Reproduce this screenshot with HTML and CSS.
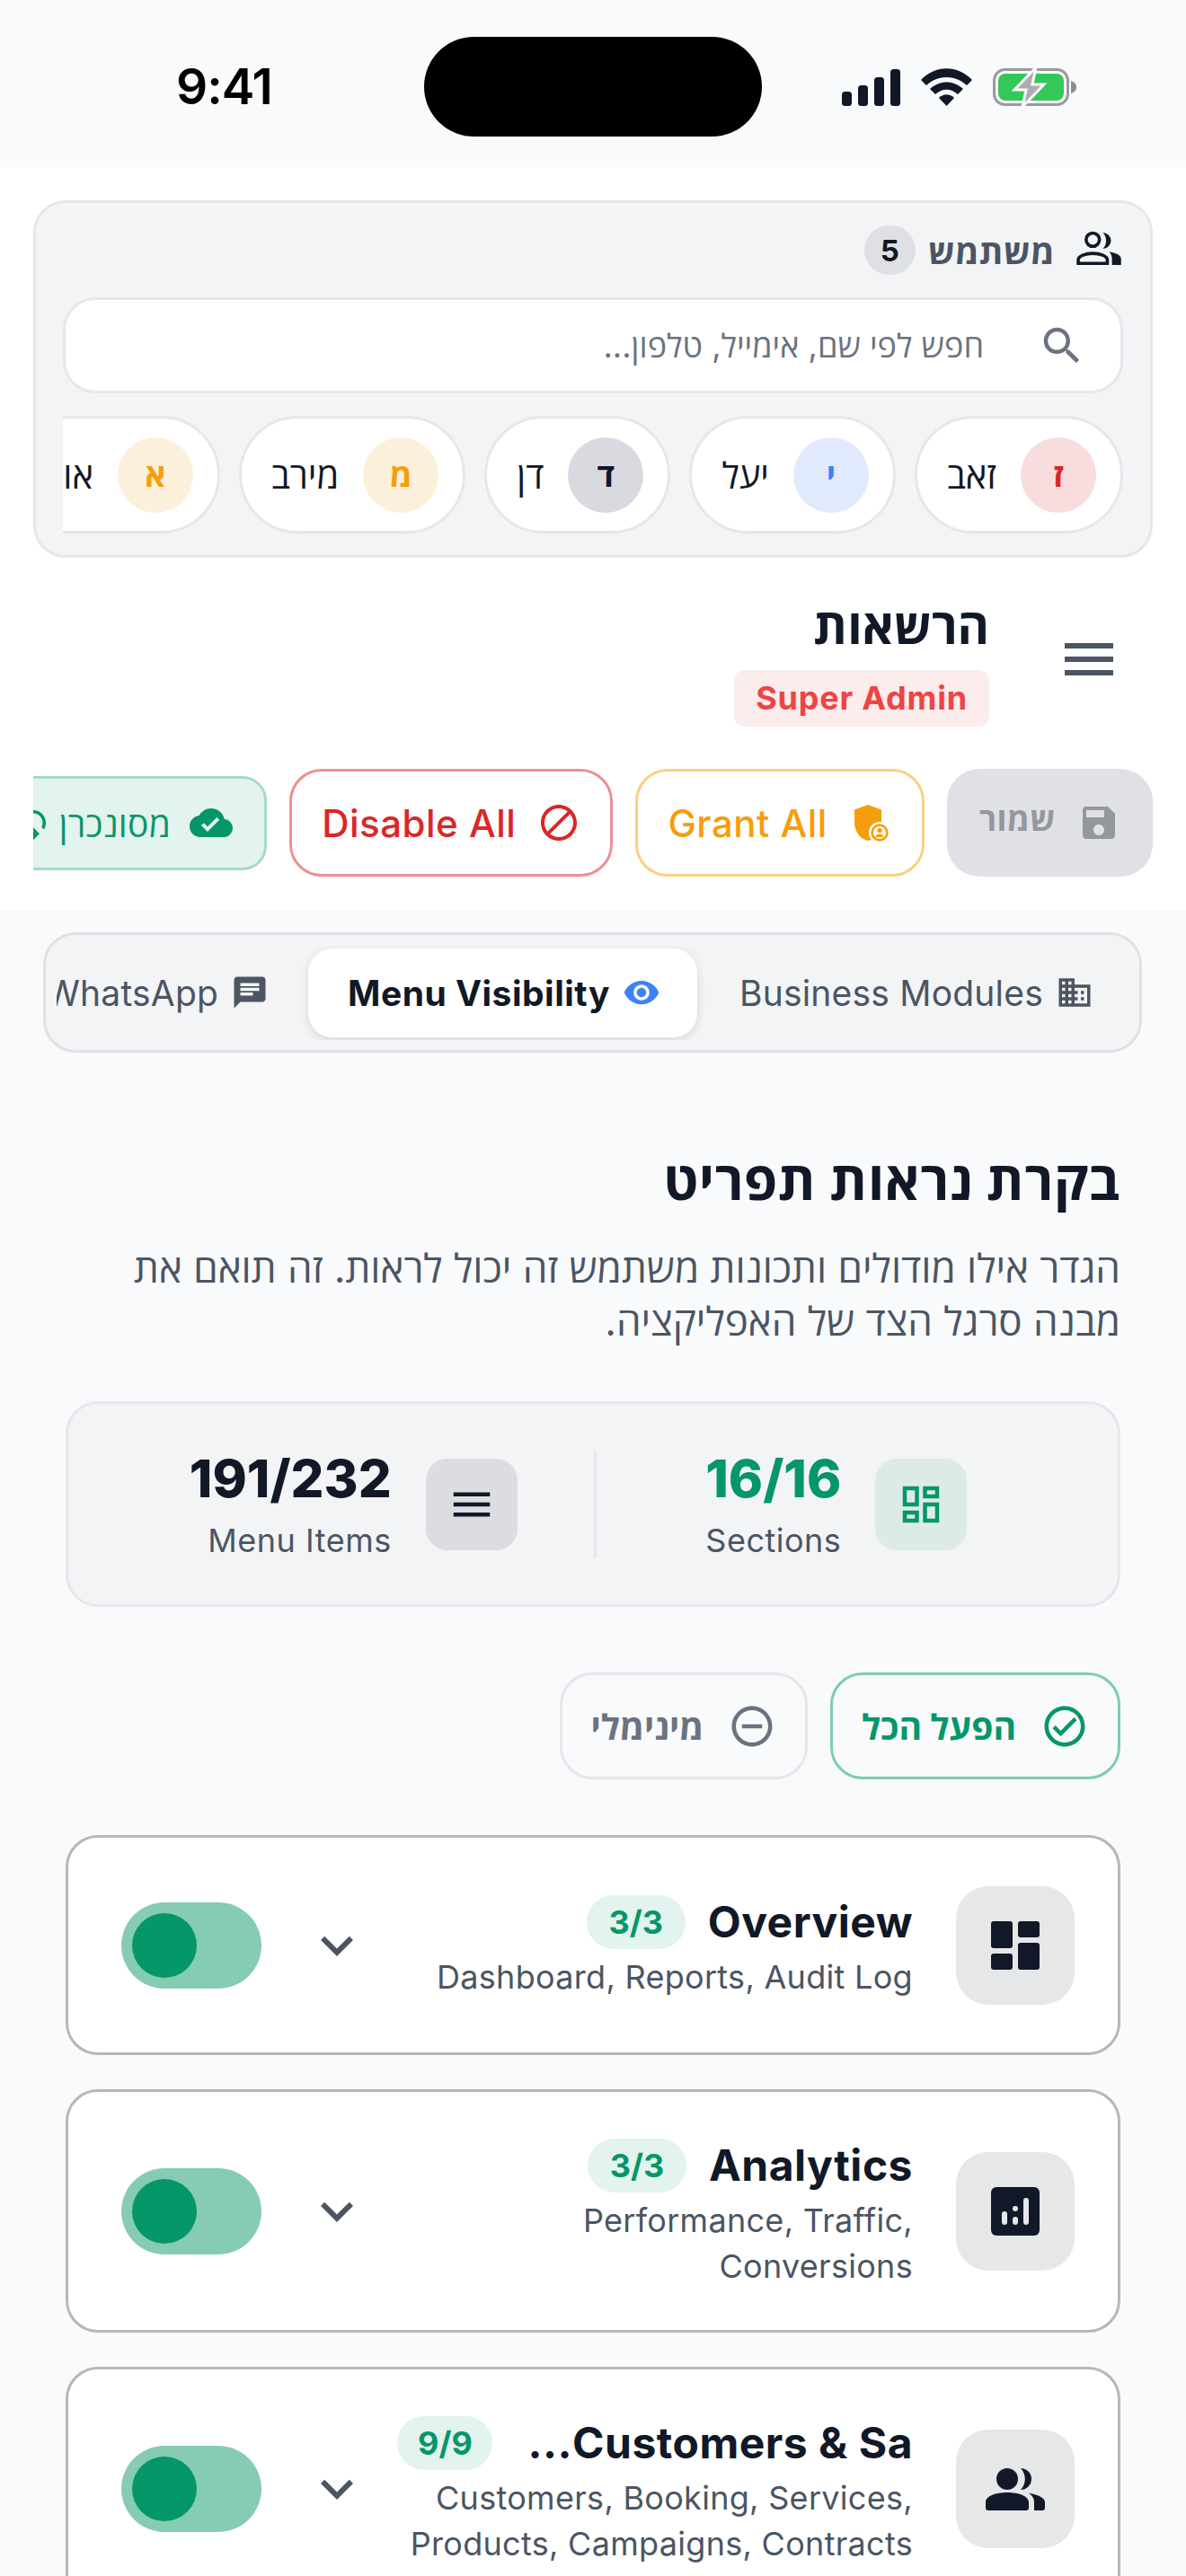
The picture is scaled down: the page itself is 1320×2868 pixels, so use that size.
FILE: index.html
```html
<!DOCTYPE html>
<html lang="he" dir="rtl">
<head>
<meta charset="utf-8">
<title>הרשאות</title>
<link rel="stylesheet" href="styles.css">
</head>
<body>
<div class="status" dir="ltr">
  <div class="time">9:41</div>
  <div class="island"></div>
  <div class="status-icons">
    <svg class="sig" viewBox="0 0 65 41"><rect x="0" y="25" width="11" height="16" rx="3.5"/><rect x="18" y="18" width="11" height="23" rx="3.5"/><rect x="36" y="9" width="11" height="32" rx="3.5"/><rect x="54" y="0" width="11" height="41" rx="3.5"/></svg>
    <svg class="wifi" viewBox="0 0 57 42"><path d="M0 13 C16 -4 41 -4 57 13 L51 19 C38 7 19 7 6 19Z"/><path d="M10 23 C21 13 36 13 47 23 L41 29 C33 22 24 22 16 29Z"/><path d="M20 33 C25 28 32 28 37 33 L28.5 42Z"/></svg>
    <svg class="bat" viewBox="0 0 93 44"><rect x="1.5" y="2.5" width="82" height="39" rx="12" fill="none" stroke="#9a9a9c" stroke-width="3"/><path d="M87 15c3 1 6 3 6 7s-3 6-6 7z" fill="#8e8e90"/><rect x="6" y="7" width="73" height="30" rx="8" fill="#34c759"/><path d="M48 0 L24 25 H37 L33 44 L57 19 H44Z" fill="#aeaeb2" stroke="#f9fafb" stroke-width="3"/></svg>
  </div>
</div>

<section class="panel">
  <div class="users">
    <div class="users-head">
      <svg class="ic54 dark" viewBox="0 0 24 24"><circle cx="9" cy="7.500" r="3.300" fill="none" stroke="currentColor" stroke-width="1.600"/><path d="M1.800 19.200v-1.700c0-2 3.600-3.200 7.200-3.200s7.200 1.200 7.200 3.200v1.700z" fill="none" stroke="currentColor" stroke-width="1.600"/><path d="M14 4a4 4 0 1 1 0 8c1-1 1.600-2.500 1.600-4S15 5 14 4zM17 13.400c2.500.4 6 1.400 6 3.600v3h-4.500v-3c0-1.600-.4-2.600-1.500-3.600z"/></svg>
      <span class="users-title">משתמש</span>
      <span class="count">5</span>
    </div>
    <div class="search">
      <svg class="ic54 grey" viewBox="0 0 24 24"><path d="M15.5 14h-.79l-.28-.27C15.41 12.59 16 11.11 16 9.5 16 5.910 13.090 3 9.500 3S3 5.910 3 9.500 5.910 16 9.500 16c1.610 0 3.090-.590 4.230-1.570l.270.280v.790l5 4.990L20.490 19l-4.990-5zm-6 0C7.010 14 5 11.990 5 9.500S7.010 5 9.500 5 14 7.010 14 9.500 11.990 14 9.500 14z"/></svg>
      <span class="placeholder">חפש לפי שם, אימייל, טלפון...</span>
    </div>
    <div class="chips">
      <div class="chip"><span class="av av-red">ז</span><span class="chip-name">זאב</span></div>
      <div class="chip"><span class="av av-blue">י</span><span class="chip-name">יעל</span></div>
      <div class="chip"><span class="av av-grey">ד</span><span class="chip-name">דן</span></div>
      <div class="chip"><span class="av av-amber">מ</span><span class="chip-name">מירב</span></div>
      <div class="chip"><span class="av av-amber">א</span><span class="chip-name">אורי</span></div>
    </div>
  </div>

  <div class="page-head">
    <svg class="hamburger" viewBox="0 0 54 36"><rect width="54" height="6"/><rect y="15" width="54" height="6"/><rect y="30" width="54" height="6"/></svg>
    <div class="page-titles">
      <h1>הרשאות</h1>
      <span class="role" dir="ltr">Super Admin</span>
    </div>
  </div>

  <div class="actions">
    <div class="btn btn-save"><svg class="ic48" viewBox="0 0 24 24"><path d="M17 3H5c-1.110 0-2 .9-2 2v14c0 1.100.890 2 2 2h14c1.100 0 2-.9 2-2V7l-4-4zm-5 16c-1.660 0-3-1.340-3-3s1.340-3 3-3 3 1.340 3 3-1.340 3-3 3zm3-10H5V5h10v4z"/></svg><span class="save-label">שמור</span></div>
    <div class="btn btn-grant"><svg class="ic48" viewBox="0 0 24 24"><path d="M10.500 2 18 4.800v7.200c0 5-3.200 9-7.500 10C6.200 21 3 17 3 12V4.800z"/><circle cx="17" cy="17.500" r="6" fill="#fff"/><circle cx="17" cy="17.500" r="4.200" fill="none" stroke="currentColor" stroke-width="1.300"/><circle cx="17" cy="16.300" r="1.300"/><path d="M14.700 20c.3-1.200 1.200-1.700 2.300-1.700s2 .5 2.300 1.700z"/></svg><span dir="ltr">Grant All</span></div>
    <div class="btn btn-disable"><svg class="ic48" viewBox="0 0 24 24"><path d="M12 2C6.480 2 2 6.480 2 12s4.480 10 10 10 10-4.480 10-10S17.520 2 12 2zM4 12c0-4.420 3.580-8 8-8 1.850 0 3.550.630 4.900 1.690L5.690 16.900C4.630 15.550 4 13.850 4 12zm8 8c-1.850 0-3.550-.630-4.900-1.690L18.310 7.100C19.370 8.450 20 10.150 20 12c0 4.420-3.580 8-8 8z"/></svg><span dir="ltr">Disable All</span></div>
    <div class="btn btn-sync"><svg class="ic48" viewBox="0 0 24 24"><path d="M19.350 10.040C18.670 6.590 15.640 4 12 4 9.110 4 6.600 5.640 5.350 8.040 2.340 8.360 0 10.910 0 14c0 3.310 2.690 6 6 6h13c2.760 0 5-2.240 5-5 0-2.640-2.050-4.780-4.650-4.960zM10 17l-3.500-3.500 1.410-1.410L10 14.170 15.180 9l1.410 1.410L10 17z"/></svg><span>מסונכרן</span><svg class="ic42 sync-ic" viewBox="0 0 24 24"><path d="M12 4V1L8 5l4 4V6c3.310 0 6 2.690 6 6 0 1.010-.250 1.970-.700 2.800l1.460 1.460C19.540 15.030 20 13.570 20 12c0-4.420-3.580-8-8-8zm0 14c-3.310 0-6-2.690-6-6 0-1.010.250-1.970.700-2.800L5.240 7.740C4.460 8.970 4 10.430 4 12c0 4.420 3.580 8 8 8v3l4-4-4-4v3z"/></svg></div>
  </div>
</section>

<main class="main">
  <nav class="tabs">
    <div class="tabs-inner">
      <div class="tab"><svg class="ic42" viewBox="0 0 24 24"><path d="M12 7V3H2v18h20V7H12zM6 19H4v-2h2v2zm0-4H4v-2h2v2zm0-4H4V9h2v2zm0-4H4V5h2v2zm4 12H8v-2h2v2zm0-4H8v-2h2v2zm0-4H8V9h2v2zm0-4H8V5h2v2zm10 12h-8v-2h2v-2h-2v-2h2v-2h-2V9h8v10zm-2-8h-2v2h2v-2zm0 4h-2v2h2v-2z"/></svg><span dir="ltr">Business Modules</span></div>
      <div class="tab tab-active"><svg class="ic42 blue" viewBox="0 0 24 24"><path d="M12 4.500C7 4.500 2.730 7.610 1 12c1.730 4.390 6 7.500 11 7.500s9.270-3.110 11-7.500c-1.730-4.390-6-7.500-11-7.500zM12 17c-2.760 0-5-2.240-5-5s2.240-5 5-5 5 2.240 5 5-2.240 5-5 5zm0-8c-1.660 0-3 1.340-3 3s1.340 3 3 3 3-1.340 3-3-1.340-3-3-3z"/></svg><span dir="ltr">Menu Visibility</span></div>
      <div class="tab"><svg class="ic42" viewBox="0 0 24 24"><path d="M20 2H4c-1.100 0-1.990.9-1.990 2L2 22l4-4h14c1.100 0 2-.9 2-2V4c0-1.100-.9-2-2-2zM6 9h12v2H6V9zm8 5H6v-2h8v2zm4-6H6V6h12v2z"/></svg><span dir="ltr">WhatsApp</span></div>
    </div>
  </nav>

  <div class="content">
    <h2>בקרת נראות תפריט</h2>
    <p class="desc">הגדר אילו מודולים ותכונות משתמש זה יכול לראות. זה תואם את מבנה סרגל הצד של האפליקציה.</p>

    <div class="stats">
      <div class="stat stat-first">
        <div class="stat-ic stat-ic-green"><svg class="ic54" viewBox="0 0 24 24"><path d="M19 5v2h-4V5h4M9 5v6H5V5h4m10 8v6h-4v-6h4M9 17v2H5v-2h4M21 3h-8v6h8V3zM11 3H3v10h8V3zm10 8h-8v10h8V11zm-10 4H3v6h8v-6z"/></svg></div>
        <div class="stat-text"><div class="stat-num green" dir="ltr">16/16</div><div class="stat-label" dir="ltr">Sections</div></div>
      </div>
      <div class="stat-div"></div>
      <div class="stat stat-last">
        <div class="stat-ic stat-ic-grey"><svg class="ic54" viewBox="0 0 24 24"><path d="M3 18h18v-2H3v2zm0-5h18v-2H3v2zm0-7v2h18V6H3z"/></svg></div>
        <div class="stat-text"><div class="stat-num" dir="ltr">191/232</div><div class="stat-label" dir="ltr">Menu Items</div></div>
      </div>
    </div>

    <div class="bulk">
      <div class="bulk-btn bulk-on"><svg class="ic54" viewBox="0 0 24 24"><path d="M12 2C6.480 2 2 6.480 2 12s4.480 10 10 10 10-4.480 10-10S17.520 2 12 2zm0 18c-4.410 0-8-3.590-8-8s3.590-8 8-8 8 3.590 8 8-3.590 8-8 8zm4.590-12.420L10 14.170l-2.590-2.580L6 13l4 4 8-8z"/></svg><span>הפעל הכל</span></div>
      <div class="bulk-btn bulk-min"><svg class="ic54" viewBox="0 0 24 24"><path d="M7 11v2h10v-2H7zm5-9C6.480 2 2 6.480 2 12s4.480 10 10 10 10-4.480 10-10S17.520 2 12 2zm0 18c-4.410 0-8-3.590-8-8s3.590-8 8-8 8 3.590 8 8-3.590 8-8 8z"/></svg><span>מינימלי</span></div>
    </div>

    <div class="cards">
      <article class="card card-short">
        <div class="card-ic"><svg class="ic72" viewBox="0 0 24 24"><rect x="3" y="3" width="8" height="10" rx="1"/><rect x="3" y="15" width="8" height="6" rx="1"/><rect x="13" y="3" width="8" height="6" rx="1"/><rect x="13" y="11" width="8" height="10" rx="1"/></svg></div>
        <div class="card-body">
          <div class="card-title-row"><h3 dir="ltr">Overview</h3><span class="pill" dir="ltr">3/3</span></div>
          <p class="card-sub">Dashboard, Reports, Audit Log</p>
        </div>
        <svg class="chev" viewBox="0 0 24 24"><path d="M7.410 8.590L12 13.170l4.590-4.580L18 10l-6 6-6-6 1.410-1.410z"/></svg>
        <div class="toggle"><span class="knob"></span></div>
      </article>
      <article class="card">
        <div class="card-ic"><svg class="ic72" viewBox="0 0 24 24"><rect x="3" y="3" width="18" height="18" rx="2"/><g class="holes"><rect x="7" y="12" width="2" height="5" rx="1"/><rect x="11" y="14" width="2" height="3" rx="1"/><rect x="11" y="10" width="2" height="2" rx="1"/><rect x="15" y="7" width="2" height="10" rx="1"/></g></svg></div>
        <div class="card-body">
          <div class="card-title-row"><h3 dir="ltr">Analytics</h3><span class="pill" dir="ltr">3/3</span></div>
          <p class="card-sub">Performance, Traffic, Conversions</p>
        </div>
        <svg class="chev" viewBox="0 0 24 24"><path d="M7.410 8.590L12 13.170l4.590-4.580L18 10l-6 6-6-6 1.410-1.410z"/></svg>
        <div class="toggle"><span class="knob"></span></div>
      </article>
      <article class="card">
        <div class="card-ic"><svg class="ic72" viewBox="0 0 24 24"><circle cx="9" cy="8.300" r="4"/><path d="M1 19v-2c0-2.500 4-3.700 8-3.700s8 1.200 8 3.700v2a1 1 0 0 1-1 1H2a1 1 0 0 1-1-1zM14 4.300a4 4 0 1 1 0 8c1-1 1.600-2.500 1.600-4S15 5.300 14 4.300zM17 13.600c2.500.4 6 1.400 6 3.400v2a1 1 0 0 1-1 1h-3v-3c0-1.600-.8-2.600-2-3.400z"/></svg></div>
        <div class="card-body">
          <div class="card-title-row card-title-cut"><h3>Customers &amp; Sa...</h3><span class="pill pill-narrow" dir="ltr">9/9</span></div>
          <p class="card-sub">Customers, Booking, Services, Products, Campaigns, Contracts</p>
        </div>
        <svg class="chev" viewBox="0 0 24 24"><path d="M7.410 8.590L12 13.170l4.590-4.580L18 10l-6 6-6-6 1.410-1.410z"/></svg>
        <div class="toggle"><span class="knob"></span></div>
      </article>
    </div>
  </div>
</main>
</body>
</html>
```
FILE: styles.css
```css
* { box-sizing: border-box; }
html, body { margin: 0; padding: 0; }
body {
  width: 1320px;
  height: 2868px;
  overflow: hidden;
  background: #f9fafb;
  color: #111827;
  font-family: Inter, "Open Sans", "Noto Sans", sans-serif;
}
svg { display: block; flex: none; fill: currentColor; }
h1, h2, h3, p { margin: 0; }

.ic42 { width: 42px; height: 42px; }
.ic48 { width: 48px; height: 48px; }
.ic54 { width: 54px; height: 54px; }
.ic72 { width: 72px; height: 72px; }

.status {
  height: 186px;
  background: #f9fafb;
  display: flex;
  align-items: flex-start;
  position: relative;
  justify-content: center;
  padding-top: 41px;
}
.time {
  position: absolute;
  left: 196px;
  top: 66px;
  font: 600 55px/60px Inter, sans-serif;
  color: #000;
  letter-spacing: -1px;
}
.island { width: 376px; height: 111px; border-radius: 56px; background: #000; }
.status-icons {
  position: absolute;
  left: 937px;
  top: 75px;
  display: flex;
  align-items: center;
  gap: 23px;
}
.sig { width: 65px; height: 41px; }
.wifi { width: 57px; height: 42px; }
.bat { width: 93px; height: 44px; }

.panel { background: #fff; height: 827px; padding: 37px 37px 0; }
.users {
  height: 398px;
  background: #f3f4f6;
  border: 3px solid #e5e7eb;
  border-radius: 36px;
  padding: 25px 30px 0;
}
.users-head { height: 55px; display: flex; align-items: center; gap: 22px; }
.users-head .dark { color: #111827; margin-top: -4px; }
.users-title { font-size: 38px; font-weight: 700; color: #4b5563; letter-spacing: .5px; }
.count {
  width: 57px; height: 55px; border-radius: 28px;
  background: #dfe0e4;
  display: flex; align-items: center; justify-content: center;
  font-size: 33px; font-weight: 700;
  margin-inline-start: -8px;
}
.search {
  margin-top: 25px;
  height: 107px;
  background: #fff;
  border: 3px solid #e5e7eb;
  border-radius: 36px;
  display: flex; align-items: center; gap: 60px;
  padding: 0 38px;
}
.grey { color: #6b7280; }
.placeholder { font-size: 36px; color: #6b7280; }
.chips { margin-top: 25px; display: flex; gap: 21px; overflow: hidden; }
.chip {
  flex: none;
  height: 131px;
  background: #fff;
  border: 3px solid #e5e7eb;
  border-radius: 66px;
  display: flex; align-items: center; gap: 27px;
  padding: 0 27px 0 33px;
}
.av {
  width: 84px; height: 84px; border-radius: 50%;
  display: flex; align-items: center; justify-content: center;
  font-size: 36px; font-weight: 700;
}
.av-red { background: #f9dcdd; color: #dc2626; }
.av-blue { background: #e1eafd; color: #3b82f6; }
.av-grey { background: #d9dadf; color: #111827; }
.av-amber { background: #fdf0da; color: #f59e0b; }
.chip-name { font-size: 40px; font-weight: 500; color: #111827; }

.page-head {
  display: flex; align-items: center; gap: 84px;
  padding: 48px 44px 0 0;
  height: 190px;
}
.hamburger { width: 54px; height: 36px; color: #4b5563; margin-top: -12px; }
.page-titles { display: flex; flex-direction: column; align-items: flex-start; gap: 21px; }
h1 { font-size: 54px; font-weight: 700; line-height: 54px; }
.role {
  height: 63px; padding: 0 24px;
  background: #fcecec; color: #ef4444;
  border-radius: 12px;
  font-size: 36px; font-weight: 700; line-height: 63px;
  letter-spacing: .8px;
}
.actions { display: flex; align-items: center; gap: 25px; overflow: hidden; margin-top: 45px; }
.btn {
  flex: none; height: 120px; border-radius: 36px;
  display: flex; align-items: center; gap: 24px;
  font-size: 42px; font-weight: 500;
  letter-spacing: .5px;
  border: 3px solid transparent;
  padding: 0 33px;
}
.save-label { margin-top: -10px; }
.btn-save { background: #e0e1e4; color: #95979e; font-weight: 700; font-size: 36px; }
.btn-grant { background: #fff; color: #f59e0b; border-color: #fbcf83; }
.btn-disable { background: #fff; color: #dc2626; border-color: #ee8f8f; }
.btn-sync { height: 105px; background: #e3f3ed; color: #059669; border-color: #a5dac6; font-size: 39px; font-weight: 500; border-radius: 27px; gap: 21px; padding: 0 35px; letter-spacing: .3px; }
.sync-ic { margin-inline-start: -13px; }

.main { background: #f9fafb; padding-top: 25px; }
.tabs {
  margin: 0 49px 0 48px;
  height: 134px;
  background: #f3f4f6;
  border: 3px solid #e0e1e4;
  border-radius: 36px;
  padding: 11px 10px 11px 12px;
}
.tabs-inner { display: flex; gap: 3px; overflow: hidden; height: 106px; align-items: center; }
.tab {
  flex: none; height: 99px;
  display: flex; align-items: center; gap: 14px;
  padding: 0 41px 0 44px;
  color: #4b5563;
  font-size: 39px;
  letter-spacing: .2px;
  border-radius: 27px;
}
.tab-active {
  background: #fff; color: #111827; font-weight: 700;
  letter-spacing: .5px;
  box-shadow: 0 3px 12px rgba(0,0,0,.12);
}
.blue { color: #3b82f6; }

.content { padding: 0 73px; }
h2 { font-size: 60px; font-weight: 700; line-height: 60px; margin-top: 112px; letter-spacing: .6px; }
.desc { font-size: 44px; line-height: 59px; color: #4b5563; margin-top: 39px; }

.stats {
  height: 229px;
  margin-top: 59px;
  background: #f3f4f6;
  border: 3px solid #e5e7eb;
  border-radius: 36px;
  display: flex; align-items: center;
}
.stat { flex: 1; display: flex; justify-content: center; align-items: center; gap: 38px; }
.stat-first { padding-inline-start: 46px; }
.stat-last { padding-inline-end: 50px; }
.stat-ic { width: 102px; height: 102px; border-radius: 24px; display: flex; align-items: center; justify-content: center; }
.stat-ic-green { background: #dcebe7; color: #059669; }
.stat-ic-grey { background: #dcdde1; color: #111827; }
.stat-text { display: flex; flex-direction: column; align-items: flex-start; padding-top: 6px; }
.stat-num { font-size: 58px; font-weight: 800; line-height: 62px; }
.green { color: #059669; }
.stat-label { font-size: 36px; line-height: 50px; color: #4b5563; margin-top: 13px; letter-spacing: .5px; }
.stat-div { width: 3px; height: 120px; background: #e5e7eb; }

.bulk { display: flex; gap: 25px; margin-top: 73px; }
.bulk-btn {
  height: 119px; border-radius: 36px;
  display: flex; align-items: center; gap: 27px;
  padding: 0 32px;
  font-size: 39px; font-weight: 700;
  border: 3px solid #e5e7eb;
}
.bulk-on { color: #059669; border-color: #7fcbb0; }
.bulk-min { color: #6b7280; }

.cards { display: flex; flex-direction: column; gap: 38px; margin-top: 62px; }
.card {
  height: 271px;
  background: #fff;
  border: 3px solid #b5b7bb;
  border-radius: 36px;
  display: flex; align-items: center;
  padding: 0 48px 0 59px;
  gap: 48px;
}
.card-short { height: 245px; }
.card-ic { width: 132px; height: 132px; border-radius: 36px; background: #e6e7e9; display: flex; align-items: center; justify-content: center; flex: none; }
.holes { fill: #e6e7e9; }
.card-body { flex: 1; min-width: 0; padding-top: 6px; margin-inline-end: -24px; }
.card-title-row { display: flex; align-items: center; gap: 25px; }
.card-title-cut { gap: 39px; }
h3 { font-size: 48px; font-weight: 700; line-height: 60px; letter-spacing: .5px; white-space: nowrap; }
.pill {
  height: 60px; width: 110px;
  background: #e3f3ed; color: #059669;
  border-radius: 30px;
  font-size: 36px; font-weight: 700;
  display: flex; align-items: center; justify-content: center;
}
.pill-narrow { width: 106px; }
.card-sub { font-size: 36px; line-height: 51px; color: #4b5563; margin-top: 6px; letter-spacing: .3px; }
.chev { width: 72px; height: 72px; color: #4b5563; flex: none; }
.toggle { width: 156px; height: 96px; border-radius: 48px; background: #85ccb3; display: flex; align-items: center; padding: 0 12px; flex: none; justify-content: flex-end; }
.knob { width: 72px; height: 72px; border-radius: 50%; background: #059669; }
```
